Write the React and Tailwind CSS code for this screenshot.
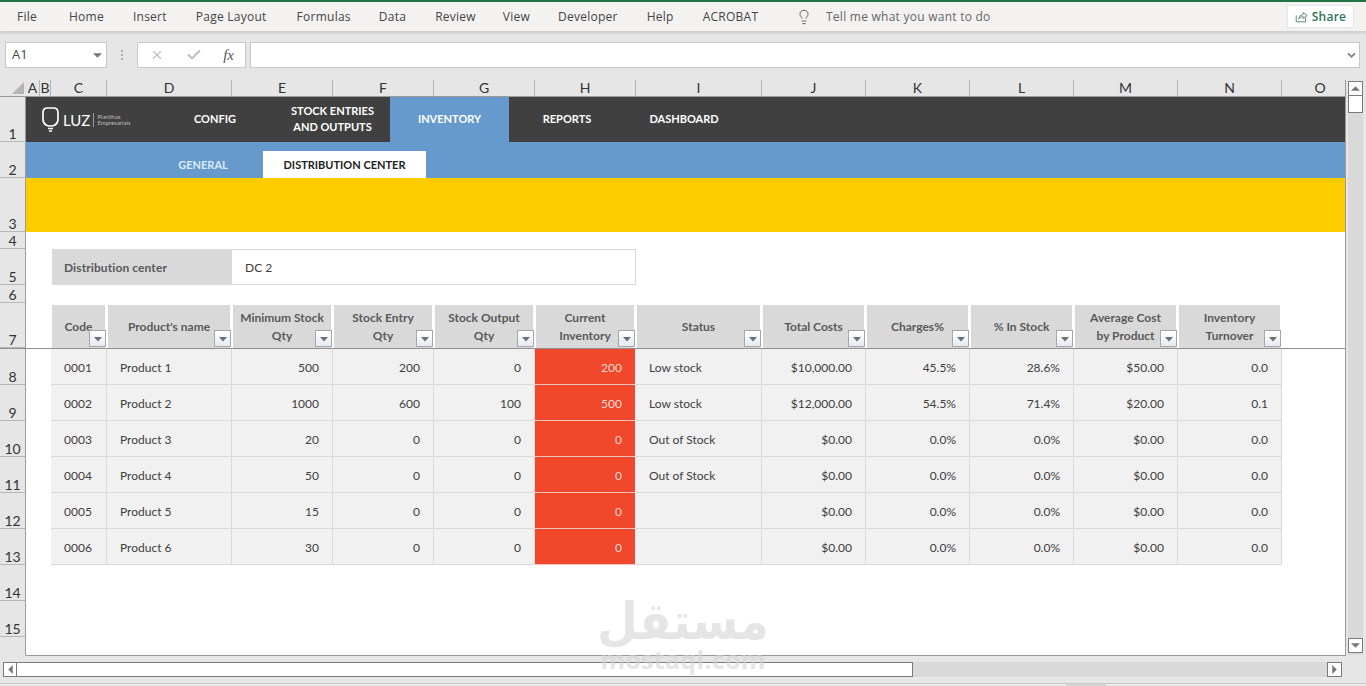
import { X, Check, Lightbulb } from 'lucide-react';

const SHEET_COLS = 'grid grid-cols-[14px_11px_56px_125px_101px_101px_101px_101px_126px_104px_104px_104px_104px_104px_63px]';

const RIBBON_TABS = [
    ['File', 'mr-[3px]'],
    ['Home', ''],
    ['Insert', ''],
    ['Page Layout', 'mr-[1px]'],
    ['Formulas', '-mr-[1px]'],
    ['Data', ''],
    ['Review', '-mr-[2px]'],
    ['View', '-mr-[1px]'],
    ['Developer', ''],
    ['Help', ''],
    ['ACROBAT', ''],
];
const LETTERS = ['A', 'B', 'C', 'D', 'E', 'F', 'G', 'H', 'I', 'J', 'K', 'L', 'M', 'N'];

const HEADERS = [
    ['Code'],
    ["Product's name"],
    ['Minimum Stock', 'Qty'],
    ['Stock Entry', 'Qty'],
    ['Stock Output', 'Qty'],
    ['Current', 'Inventory'],
    ['Status'],
    ['Total Costs'],
    ['Charges%'],
    ['% In Stock'],
    ['Average Cost', 'by Product'],
    ['Inventory', 'Turnover'],
];

const ROWS = [
    ['0001', 'Product 1', '500', '200', '0', '200', 'Low stock', '$10,000.00', '45.5%', '28.6%', '$50.00', '0.0'],
    ['0002', 'Product 2', '1000', '600', '100', '500', 'Low stock', '$12,000.00', '54.5%', '71.4%', '$20.00', '0.1'],
    ['0003', 'Product 3', '20', '0', '0', '0', 'Out of Stock', '$0.00', '0.0%', '0.0%', '$0.00', '0.0'],
    ['0004', 'Product 4', '50', '0', '0', '0', 'Out of Stock', '$0.00', '0.0%', '0.0%', '$0.00', '0.0'],
    ['0005', 'Product 5', '15', '0', '0', '0', '', '$0.00', '0.0%', '0.0%', '$0.00', '0.0'],
    ['0006', 'Product 6', '30', '0', '0', '0', '', '$0.00', '0.0%', '0.0%', '$0.00', '0.0'],
];

// columns that read from the left, the rest are numbers
const LEFT_ALIGNED = [0, 1, 6];

const Triangle = ({ className, points }) => (
    <svg viewBox="0 0 8 8" className={className}>
        <polygon points={points} fill="currentColor" />
    </svg>
);

const SheetRow = ({ num, height, children }) => (
    <div className={`flex ${height}`}>
        <div className="w-[26px] shrink-0 flex items-end justify-center bg-[#e6e6e6] border-b border-[#b8b8b8] border-r border-r-[#9a9a9a] text-[14px] leading-[14px] text-[#333]">
            {num}
        </div>
        <div className={`${SHEET_COLS} w-[1319px] bg-white`}>{children}</div>
    </div>
);

const FilterButton = () => (
    <div className="absolute right-[-1px] bottom-[1px] w-[17px] h-[17px] flex items-center justify-center border border-[#a6a6a6] bg-gradient-to-b from-white to-[#e4ebf3]">
        <Triangle className="w-[8px] h-[8px] text-[#6f6f6f]" points="0,2 8,2 4,6.5" />
    </div>
);

const BulbLogo = () => (
    <svg viewBox="0 0 17 25" className="w-[17px] h-[25px] text-white" fill="none" stroke="currentColor" strokeWidth="1.7">
        <path d="M5.5 1 H11.5 Q16 1 16 5.5 V12.5 Q16 16 13 18 Q11.5 19 8.5 19 Q5.5 19 4 18 Q1 16 1 12.5 V5.5 Q1 1 5.5 1 Z" />
        <path d="M6 21.5 H11 M7 24 H10" strokeWidth="1.6" />
    </svg>
);

const Ribbon = () => (
    <div className="h-[31px] shrink-0 flex items-center justify-between border-t-2 border-[#217346] bg-[#f3f2f1] shadow-[0_2px_3px_rgba(0,0,0,0.12)] text-[12px] tracking-[0.25px] text-[#444] font-['Open_Sans',sans-serif] relative">
        <div className="flex items-center">
            <div className="flex gap-[29px] pl-[17px] w-[786px]">
                {RIBBON_TABS.map(([tab, nudge]) => (
                    <span key={tab} className={nudge}>{tab}</span>
                ))}
            </div>
            <Lightbulb className="w-[16px] h-[18px] text-[#555] ml-[10px]" strokeWidth={1.3} />
            <span className="ml-[14px] text-[#666]">Tell me what you want to do</span>
        </div>
        <div className="mr-[12px] w-[67px] h-[23px] flex items-center justify-center gap-[4px] bg-white border border-[#e6e6e6] text-[#2f7557] font-semibold">
            <svg viewBox="0 0 16 16" className="w-[13px] h-[13px]" fill="none" stroke="#4f7f68" strokeWidth="1.1">
                <path d="M1.5 6.5 V14.5 H13 V9.5" />
                <path d="M4.5 11 Q5 6 10 5.5 V3 L15 6.8 L10 10.5 V8 Q7 8 4.5 11 Z" />
            </svg>
            Share
        </div>
    </div>
);

const FormulaBar = () => (
    <div className="h-[49px] shrink-0 flex items-start pl-[5px] pt-[11px] font-['Open_Sans',sans-serif]">
        <div className="w-[102px] h-[26px] flex items-center justify-between bg-white border border-[#c8c8c8] pl-[6px] pr-[4px] text-[13px] text-[#444]">
            A1
            <Triangle className="w-[9px] h-[9px] text-[#777]" points="0,2 8,2 4,6" />
        </div>
        <div className="w-[30px] h-[26px] flex flex-col items-center justify-center gap-[2px]">
            <span className="w-[2px] h-[2px] bg-[#aaa]" />
            <span className="w-[2px] h-[2px] bg-[#aaa]" />
            <span className="w-[2px] h-[2px] bg-[#aaa]" />
        </div>
        <div className="w-[109px] h-[26px] flex items-center justify-between bg-white border border-[#c8c8c8] pl-[12px] pr-[11px]">
            <X className="w-[14px] h-[14px] text-[#bdbdbd]" strokeWidth={2} />
            <Check className="w-[16px] h-[16px] text-[#bdbdbd]" strokeWidth={3} />
            <span className="font-['Liberation_Serif',serif] italic text-[15px] text-[#555]">fx</span>
        </div>
        <div className="ml-[4px] w-[1110px] h-[26px] flex items-center justify-end bg-white border border-[#c8c8c8] pr-[3px]">
            <svg viewBox="0 0 10 8" className="w-[9px] h-[7px]" fill="none" stroke="#808080" strokeWidth="2">
                <path d="M1 1.5 L5 5.5 L9 1.5" />
            </svg>
        </div>
    </div>
);

const ColumnHeaders = () => (
    <div className="h-[16px] flex">
        <div className="w-[26px] shrink-0 flex items-end justify-end pr-[2px] pb-[2px]">
            <svg viewBox="0 0 12 12" className="w-[12px] h-[12px]">
                <polygon points="12,0 12,12 0,12" fill="#b4b4b4" />
            </svg>
        </div>
        <div className={`${SHEET_COLS} w-[1319px] text-[14px] leading-[16px] text-[#333]`}>
            {LETTERS.map((letter) => (
                <div key={letter} className="text-center border-r border-[#b4b4b4]">
                    {letter}
                </div>
            ))}
            <div className="text-center pl-[13px]">O</div>
        </div>
    </div>
);

const HeaderCell = ({ lines }) => (
    <div className="relative mt-[2px] ml-[1px] mr-[2px] bg-[#d9d9d9] flex flex-col items-center justify-center font-bold text-[12px] leading-[18px] text-[#595959]">
        {lines.map((line) => (
            <span key={line}>{line}</span>
        ))}
        <FilterButton />
    </div>
);

const DataCell = ({ value, index }) => {
    const isRed = index === 5;
    const align = LEFT_ALIGNED.includes(index) ? 'pl-[13px]' : 'justify-end pr-[13px]';
    const tone = isRed
        ? 'bg-[#f1472b] text-[#fbdcd4] border-b-[#f3c5ba] border-r-[#f1f1f1]'
        : 'bg-[#f1f1f1] text-[#404040] border-b-[#d9d9d9] border-r-[#d9d9d9]';
    return <div className={`flex items-center pt-[3px] text-[12px] border-b border-r ${align} ${tone}`}>{value}</div>;
};

const Watermark = () => (
    <div className="absolute left-[596px] top-[597px] w-[174px] flex flex-col items-center pointer-events-none text-[#d4d4d4] opacity-60">
        <span className="font-['DejaVu_Sans',sans-serif] font-bold text-[47px] leading-[48px] scale-y-110">مستقل</span>
        <span className="mt-[3px] font-['Open_Sans',sans-serif] font-bold text-[25px] leading-[22px] tracking-[0.3px]">mostaql.com</span>
    </div>
);

export default function App() {
    return (
        <div className="relative w-[1366px] h-[686px] overflow-hidden flex flex-col bg-[#e6e6e6] font-['Lato',sans-serif]">
            <Ribbon />
            <FormulaBar />

            <div className="flex">
                <div className="w-[1346px] shrink-0 border-r border-[#9a9a9a]">
                    <ColumnHeaders />

                    <div className="border-t border-[#9a9a9a]">
                        {/* Menu rows */}
                        <SheetRow num="1" height="h-[45px]">
                            <div className="col-span-full flex bg-[#404040] font-bold text-[11px] leading-[16px] text-white">
                                <div className="w-[139px] flex items-center pl-[16px]">
                                    <BulbLogo />
                                    <span className="ml-[4px] text-[15px] font-normal">LUZ</span>
                                    <span className="ml-[3px] w-[1px] h-[14px] bg-[#999]" />
                                    <span className="ml-[3px] text-[6px] leading-[6px] font-normal text-[#bdbdbd]">
                                        Planilhas
                                        <br />
                                        Empresariais
                                    </span>
                                </div>
                                <div className="w-[100px] flex items-center justify-center pb-[1px]">CONFIG</div>
                                <div className="w-[125px] flex items-center justify-center text-center pl-[10px] pb-[1px]">
                                    STOCK ENTRIES
                                    <br />
                                    AND OUTPUTS
                                </div>
                                <div className="w-[119px] flex items-center justify-center pb-[1px] bg-[#6699cc]">INVENTORY</div>
                                <div className="w-[116px] flex items-center justify-center pb-[1px]">REPORTS</div>
                                <div className="w-[118px] flex items-center justify-center pb-[1px]">DASHBOARD</div>
                            </div>
                        </SheetRow>
                        <SheetRow num="2" height="h-[36px]">
                            <div className="col-span-full flex items-end pl-[127px] bg-[#6699cc] font-bold text-[11px]">
                                <div className="w-[100px] h-[27px] flex items-center justify-center pt-[1px] text-[#dcebf7]">GENERAL</div>
                                <div className="ml-[10px] w-[163px] h-[27px] flex items-center justify-center pt-[1px] bg-white text-[#222]">
                                    DISTRIBUTION CENTER
                                </div>
                            </div>
                        </SheetRow>
                        <SheetRow num="3" height="h-[54px]">
                            <div className="col-span-full bg-[#ffcc00]" />
                        </SheetRow>
                        <SheetRow num="4" height="h-[17px]" />
                        <SheetRow num="5" height="h-[36px]">
                            <div className="col-start-3 col-span-2 ml-[1px] flex items-center pl-[12px] pt-[1px] bg-[#d9d9d9] font-bold text-[12px] tracking-[0.1px] text-[#595959]">
                                Distribution center
                            </div>
                            <div className="col-span-4 flex items-center pl-[13px] pt-[1px] border border-l-0 border-[#d9d9d9] text-[12px] text-[#404040]">
                                DC 2
                            </div>
                        </SheetRow>
                        <SheetRow num="6" height="h-[18px]" />
                        <SheetRow num="7" height="h-[45px]">
                            <div className="col-span-2" />
                            {HEADERS.map((lines) => (
                                <HeaderCell key={lines[0]} lines={lines} />
                            ))}
                        </SheetRow>

                        {/* freeze pane line */}
                        <div className="h-[1px] bg-[#8f8f8f]" />

                        {ROWS.map((row, i) => (
                            <SheetRow key={row[0]} num={String(i + 8)} height="h-[36px]">
                                <div className="col-span-2" />
                                {row.map((value, index) => (
                                    <DataCell key={index} value={value} index={index} />
                                ))}
                            </SheetRow>
                        ))}

                        <SheetRow num="14" height="h-[36px]" />
                        <SheetRow num="15" height="h-[36px]" />
                        <div className="flex h-[19px]">
                            <div className="w-[26px] shrink-0 border-r border-b border-r-[#9a9a9a] border-b-[#e6e6e6]" />
                            <div className="flex-1 bg-white border-b border-[#9a9a9a]" />
                        </div>
                    </div>
                </div>

                {/* vertical scrollbar */}
                <div className="ml-[2px] mt-[1px] w-[15px] h-[574px] flex flex-col bg-[#d9d9d9]">
                    <div className="h-[15px] flex items-center justify-center bg-white border border-[#7a7a7a]">
                        <Triangle className="w-[9px] h-[9px] text-[#777]" points="4,2 8,6 0,6" />
                    </div>
                    <div className="h-[17px] bg-white border border-[#7a7a7a] border-t-0" />
                    <div className="flex-1" />
                    <div className="h-[15px] mb-[2px] flex items-center justify-center bg-white border border-[#7a7a7a]">
                        <Triangle className="w-[9px] h-[9px] text-[#777]" points="0,2 8,2 4,6" />
                    </div>
                </div>
            </div>

            {/* horizontal scrollbar */}
            <div className="mt-[6px] ml-[3px] w-[1339px] h-[15px] flex bg-[#d9d9d9]">
                <div className="w-[14px] flex items-center justify-center bg-white border border-[#7a7a7a]">
                    <Triangle className="w-[9px] h-[9px] text-[#777]" points="6,0 6,8 2,4" />
                </div>
                <div className="w-[896px] bg-white border border-l-0 border-[#7a7a7a]" />
                <div className="flex-1" />
                <div className="w-[15px] flex items-center justify-center bg-white border border-[#7a7a7a]">
                    <Triangle className="w-[9px] h-[9px] text-[#777]" points="2,0 6,4 2,8" />
                </div>
            </div>

            <div className="mt-[6px] flex-1 border-t border-[#c8c8c8] bg-[#ececec]">
                <div className="ml-[1066px] w-[40px] h-full bg-[#d4d4d4]" />
            </div>

            <Watermark />
        </div>
    );
}
